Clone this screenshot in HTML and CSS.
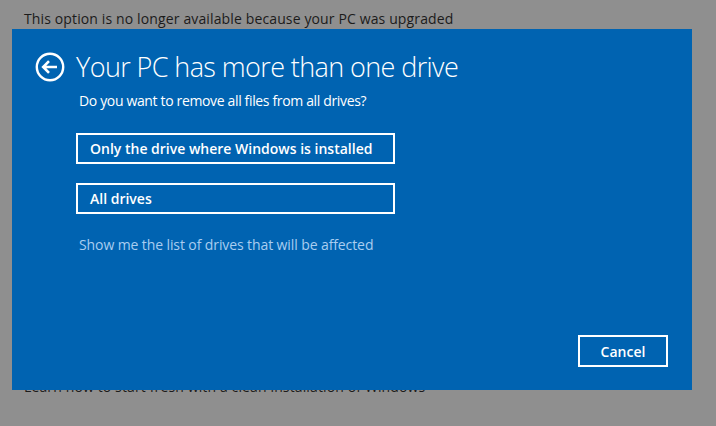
FILE: index.html
```html
<!DOCTYPE html>
<html>
<head>
<meta charset="utf-8">
<link rel="stylesheet" href="styles.css">
</head>
<body>
<div class="page">
  <p class="note">This option is no longer available because your PC was upgraded</p>
  <p class="learn">Learn how to start fresh with a clean installation of Windows</p>
</div>
<div class="dialog">
  <div class="head">
    <svg class="back" width="30" height="30" viewBox="0 0 30 30">
      <circle cx="15" cy="15" r="13.2" fill="none" stroke="#fff" stroke-width="2.4"/>
      <path d="M22 15H8.5M14 9.2L8.2 15L14 20.8" fill="none" stroke="#fff" stroke-width="2.6"/>
    </svg>
    <h1 class="title">Your PC has more than one drive</h1>
  </div>
  <div class="body">
    <p class="question">Do you want to remove all files from all drives?</p>
    <div class="choices">
      <button class="choice">Only the drive where Windows is installed</button>
      <button class="choice">All drives</button>
    </div>
    <a class="link">Show me the list of drives that will be affected</a>
  </div>
  <div class="footer">
    <button class="cancel">Cancel</button>
  </div>
</div>
</body>
</html>
```
FILE: styles.css
```css
html, body {
  margin: 0;
  height: 100%;
}
body {
  background: #8f8f8f;
  font-family: "Open Sans", "Noto Sans", sans-serif;
  position: relative;
  overflow: hidden;
}
.page {
  padding: 9px 24px 0;
  display: flex;
  flex-direction: column;
  gap: 348px;
}
.note, .learn {
  margin: 0;
  font-size: 14px;
  letter-spacing: 0.13px;
  color: #1b1b1b;
  line-height: 20px;
}
.dialog {
  position: absolute;
  left: 12px;
  top: 29px;
  width: 680px;
  height: 361px;
  background: #0063b1;
  color: #fff;
  display: flex;
  flex-direction: column;
  box-sizing: border-box;
  padding: 0 24px 23px 64px;
}
.head {
  display: flex;
  align-items: center;
  margin-left: -41px;
  margin-top: 23px;
  gap: 11px;
}
.back { flex: none; }
.title {
  margin: 0;
  font-weight: 300;
  font-size: 27px;
  line-height: 30px;
  letter-spacing: -0.6px;
}
.body {
  flex: 1;
  display: flex;
  flex-direction: column;
  align-items: flex-start;
}
.question {
  margin: 9px 0 0 3px;
  font-size: 14px;
  letter-spacing: -0.35px;
  line-height: 20px;
}
.choices {
  margin-top: 22px;
  display: flex;
  flex-direction: column;
  gap: 19px;
}
.choice, .cancel {
  font-family: inherit;
  background: transparent;
  color: #fff;
  border: 2px solid #fff;
  font-size: 14px;
  font-weight: 600;
  margin: 0;
  cursor: pointer;
}
.choice {
  width: 319px;
  height: 31px;
  text-align: left;
  padding: 0 12px;
}
.link {
  margin: 21px 0 0 3px;
  font-size: 14px;
  letter-spacing: -0.1px;
  line-height: 20px;
  color: #a9cdf0;
}
.footer {
  display: flex;
  justify-content: flex-end;
}
.cancel {
  width: 90px;
  height: 32px;
}
```
